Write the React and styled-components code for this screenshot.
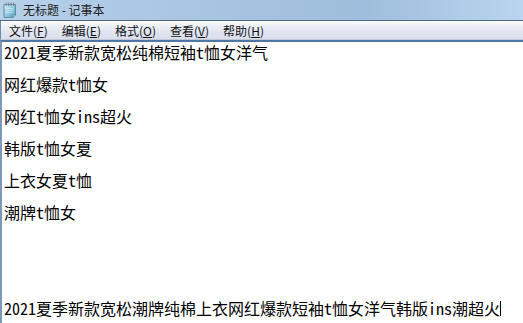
import React from 'react'
import styled, { createGlobalStyle } from 'styled-components'

const GlobalStyle = createGlobalStyle`
  html, body {
    margin: 0;
    padding: 0;
    background: #ffffff;
    overflow: hidden;
  }
`

const uiFont = `"Noto Sans CJK SC", "Noto Sans", sans-serif`
const editorFont = `"Noto Sans Mono CJK SC", "Noto Sans CJK SC", "Liberation Mono", monospace`

const Window = styled.div`
  display: flex;
  flex-direction: column;
  width: 523px;
  height: 323px;
  overflow: hidden;
  background: #ffffff;
`

const TitleBar = styled.div`
  display: flex;
  align-items: center;
  gap: 5px;
  height: 20px;
  padding-left: 2px;
  background: linear-gradient(90deg, #b7d0ea 0%, #a7c4e1 40%, #9fbedd 70%, #b9d5ef 100%);
  border-bottom: 1px solid #4d6886;
`

const TitleText = styled.span`
  font-family: ${uiFont};
  font-size: 12px;
  line-height: 20px;
  color: #222222;
  margin-top: -1px;
`

const MenuBar = styled.div`
  display: flex;
  height: 18px;
  padding-left: 1px;
  background: linear-gradient(180deg, #fbfcfe 0%, #eef1f8 25%, #e0e5f1 60%, #d9dfee 100%);
  border-left: 1px solid #6d8bab;
  border-bottom: 1px solid #c2c8d6;
`

const MenuItem = styled.div`
  display: flex;
  align-items: center;
  padding: 0 7px;
  font-family: ${uiFont};
  font-size: 12px;
  color: #111111;
`

const Hotkey = styled.span`
  text-decoration: underline;
  text-underline-offset: 1px;
`

const Editor = styled.div`
  flex: 1;
  border-top: 2px solid #4f77a5;
  border-left: 2px solid #7d99ba;
  padding: 2px 0 0 2px;
  background: #ffffff;
`

const Line = styled.div`
  height: 16px;
  font-family: ${editorFont};
  font-size: 16px;
  line-height: 16px;
  color: #000000;
  white-space: pre;
  display: flex;
  align-items: center;
`

const Caret = styled.span`
  display: inline-block;
  width: 1px;
  height: 15px;
  margin-left: 0;
  background: #000000;
`

const NotepadIcon = () => (
  <svg width="16" height="18" viewBox="0 0 16 18">
    <defs>
      <linearGradient id="pad" x1="0" y1="0" x2="1" y2="1">
        <stop offset="0" stopColor="#d8eef6" />
        <stop offset="0.55" stopColor="#8cc6dd" />
        <stop offset="1" stopColor="#4d98bb" />
      </linearGradient>
    </defs>
    <path d="M2 3.5 H13.5 V14 L11 16.5 H2 Z" fill="url(#pad)" stroke="#4b7f97" strokeWidth="0.8" />
    <path d="M13.5 14 L11 16.5 V14 Z" fill="#e8f4f8" stroke="#4b7f97" strokeWidth="0.6" />
    {[3.5, 6, 8.5, 11].map(x => (
      <rect key={x} x={x} y="1.5" width="1.2" height="3.6" rx="0.6" fill="#7a8a94" />
    ))}
    {[7.5, 9.5, 11.5].map(y => (
      <line key={y} x1="4" y1={y} x2="11.5" y2={y} stroke="#ffffff" strokeOpacity="0.55" strokeWidth="0.7" />
    ))}
  </svg>
)

const menus = [
  ['文件', 'F'],
  ['编辑', 'E'],
  ['格式', 'O'],
  ['查看', 'V'],
  ['帮助', 'H']
]

const lines = [
  '2021夏季新款宽松纯棉短袖t恤女洋气',
  '',
  '网红爆款t恤女',
  '',
  '网红t恤女ins超火',
  '',
  '韩版t恤女夏',
  '',
  '上衣女夏t恤',
  '',
  '潮牌t恤女',
  '',
  '',
  '',
  '',
  '',
  '2021夏季新款宽松潮牌纯棉上衣网红爆款短袖t恤女洋气韩版ins潮超火'
]

const App = () => {
  return (
    <>
      <GlobalStyle />
      <Window>
        <TitleBar>
          <NotepadIcon />
          <TitleText>无标题 - 记事本</TitleText>
        </TitleBar>
        <MenuBar>
          {menus.map(([label, key]) => (
            <MenuItem key={key}>
              {label}(<Hotkey>{key}</Hotkey>)
            </MenuItem>
          ))}
        </MenuBar>
        <Editor>
          {lines.map((text, i) => (
            <Line key={i}>
              {text}
              {i === lines.length - 1 ? <Caret /> : null}
            </Line>
          ))}
        </Editor>
      </Window>
    </>
  )
}

export default App
